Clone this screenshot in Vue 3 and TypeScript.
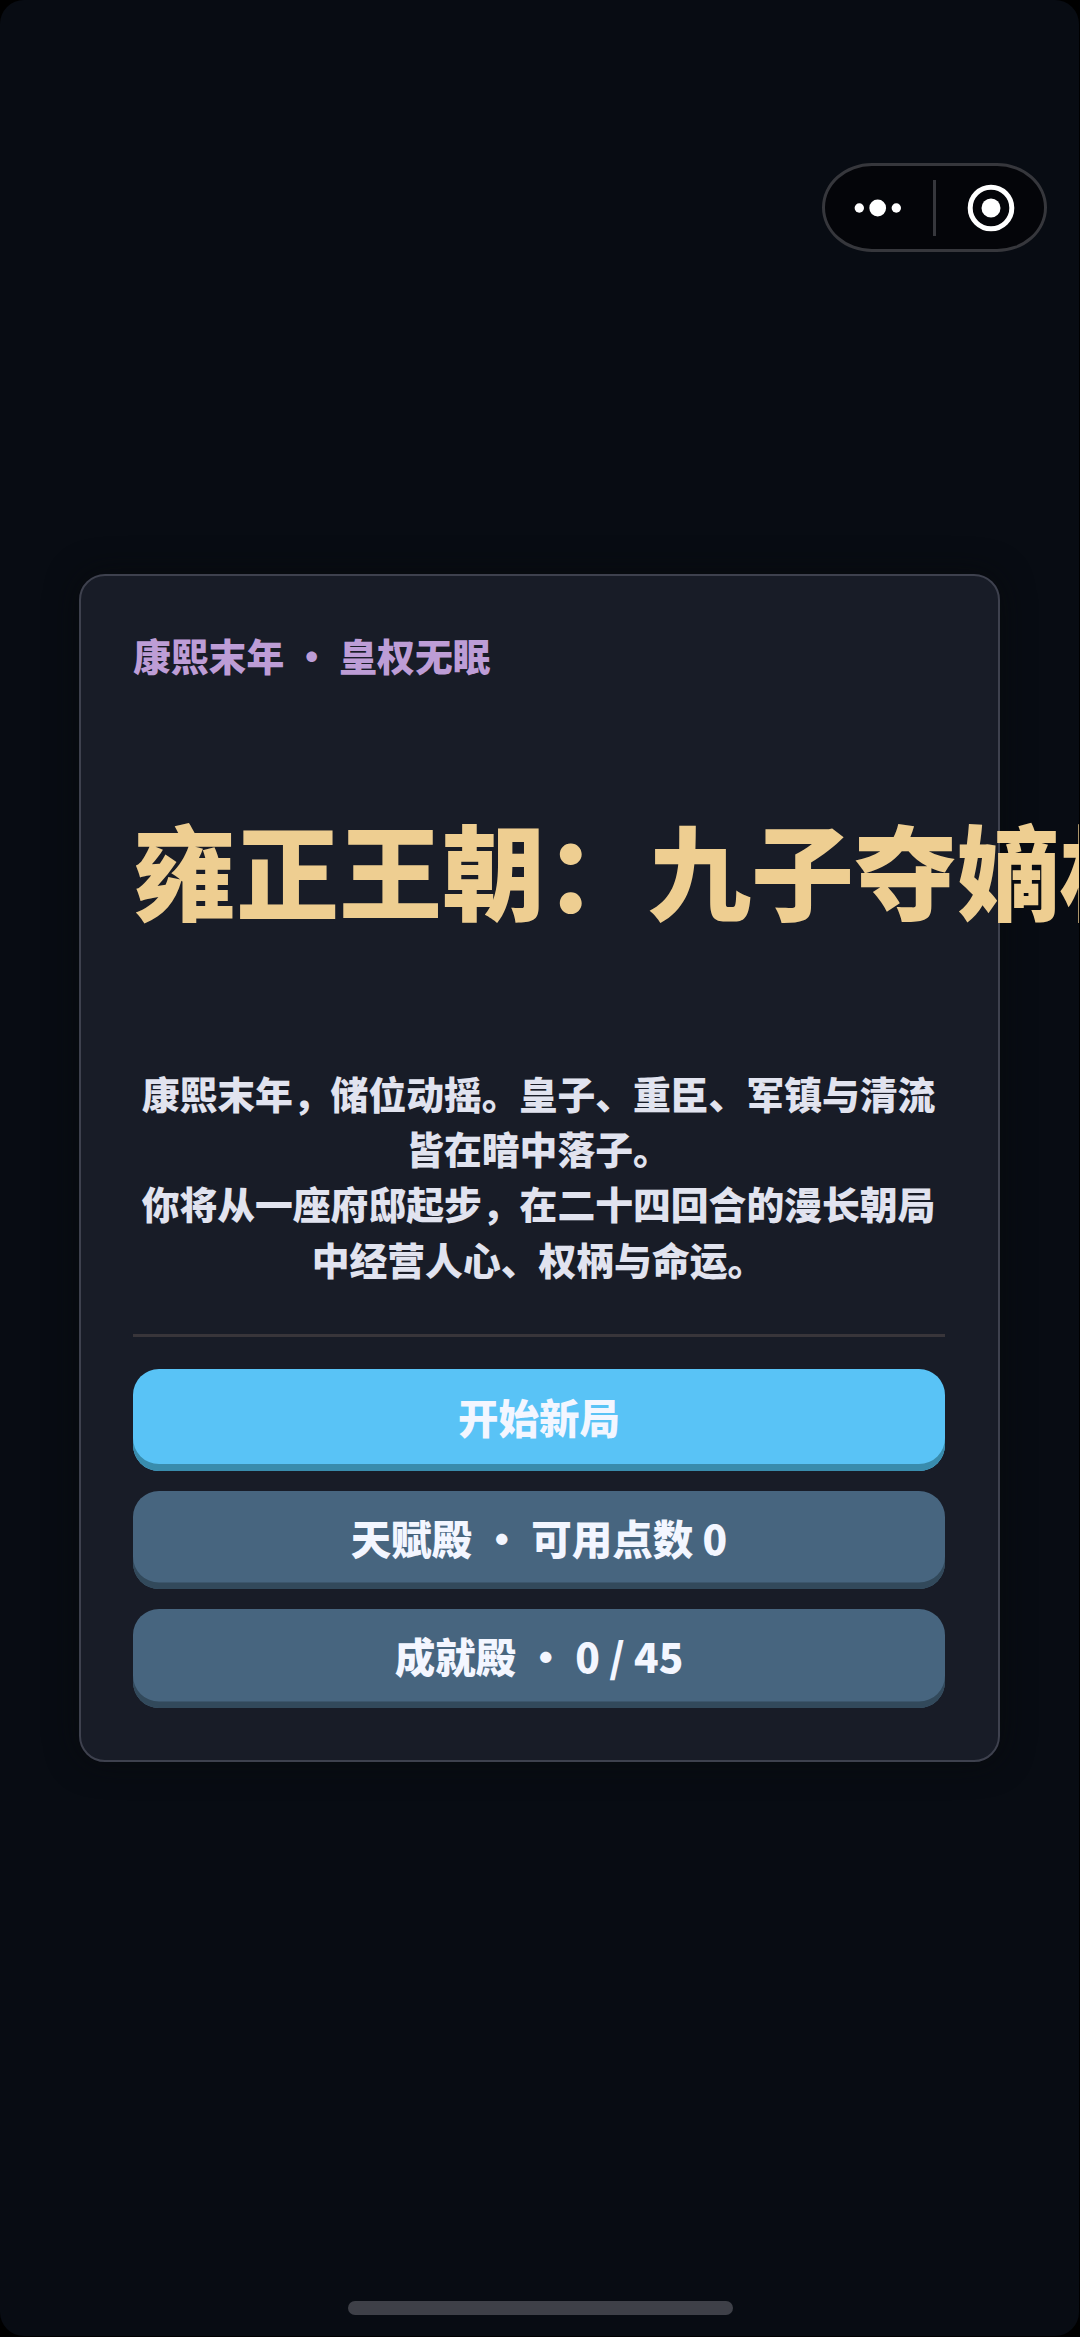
<script setup lang="ts">
interface MenuAction {
  label: string
  primary?: boolean
}

const actions: MenuAction[] = [
  { label: '开始新局', primary: true },
  { label: '天赋殿 · 可用点数 0' },
  { label: '成就殿 · 0 / 45' },
]
</script>

<template>
  <div class="device">
    <div class="screen">
      <header class="topbar">
        <div class="capsule">
          <svg class="more" viewBox="0 0 48 18" width="48" height="18" fill="#fff">
            <circle cx="5.3" cy="9" r="4.7" />
            <circle cx="23.7" cy="9" r="8.4" />
            <circle cx="42.3" cy="9" r="4.7" />
          </svg>
          <span class="split"></span>
          <svg class="close" viewBox="0 0 48 48" width="48" height="48">
            <circle cx="24" cy="24" r="20.8" fill="none" stroke="#fff" stroke-width="5" />
            <circle cx="24" cy="24" r="9.5" fill="#fff" />
          </svg>
        </div>
      </header>

      <main class="card">
        <p class="eyebrow">康熙末年 · 皇权无眠</p>
        <h1 class="title">雍正王朝：九子夺嫡权谋</h1>
        <p class="intro">
          康熙末年，储位动摇。皇子、重臣、军镇与清流皆在暗中落子。<br />你将从一座府邸起步，在二十四回合的漫长朝局中经营人心、权柄与命运。
        </p>
        <div class="rule"></div>
        <div class="actions">
          <button
            v-for="action in actions"
            :key="action.label"
            class="action"
            :class="{ primary: action.primary }"
            type="button"
          >
            {{ action.label }}
          </button>
        </div>
      </main>

      <footer class="bottom"><span class="home"></span></footer>
    </div>
  </div>
</template>

<style>
body {
  margin: 0;
  background: #000;
  overflow: hidden;
}
</style>

<style scoped>
.device {
  width: 1080px;
  height: 2337px;
  background: #000;
  overflow: hidden;
  font-family: 'Noto Sans CJK SC', sans-serif;
  font-weight: 900;
}
.screen {
  box-sizing: border-box;
  width: 1079px;
  height: 2336px;
  display: flex;
  flex-direction: column;
  overflow: hidden;
  border-radius: 24px;
  background: #080c13;
}
.topbar {
  height: 574px;
  flex: none;
  display: flex;
  justify-content: flex-end;
  align-items: flex-start;
  padding: 163px 32px 0 0;
  box-sizing: border-box;
}
.capsule {
  box-sizing: border-box;
  width: 225px;
  height: 89px;
  display: flex;
  align-items: center;
  border: 3px solid #36373c;
  border-radius: 50px / 44.5px;
  background: #040509;
}
.more {
  margin-left: 29px;
}
.split {
  width: 3px;
  height: 56px;
  margin-left: 31px;
  background: #36373c;
}
.close {
  margin-left: 31px;
}
.card {
  box-sizing: border-box;
  width: 921px;
  height: 1188px;
  flex: none;
  margin-left: 79px;
  padding: 51px 53px 0 52px;
  border: 2px solid #3e414e;
  border-radius: 26px;
  background: #181c27;
  box-shadow: 0 0 32px rgba(8, 10, 12, 0.7);
}
.eyebrow {
  margin: 0;
  font-size: 37.8px;
  line-height: 56px;
  color: #bd9dd6;
}
.title {
  margin: 111px 0 0;
  font-size: 103px;
  font-weight: 900;
  line-height: 150px;
  white-space: nowrap;
  color: #eece91;
}
.intro {
  margin: 121px 1px 0 0;
  font-size: 37.8px;
  line-height: 55.2px;
  text-align: center;
  color: #e1e3ef;
}
.rule {
  height: 3px;
  margin-top: 48px;
  background: #38353a;
}
.actions {
  display: flex;
  flex-direction: column;
  gap: 20px;
  margin-top: 32px;
}
.action {
  height: 98.5px;
  padding: 0 0 5px;
  border: 0;
  border-radius: 26px;
  background: #47657f;
  box-shadow: inset 0 -6.5px 0 #32495b;
  font: inherit;
  font-size: 40.5px;
  line-height: 58px;
  color: #f3f6ff;
}
.action.primary {
  height: 102px;
  background: #59c3f6;
  box-shadow: inset 0 -7px 0 #398cad;
}
.bottom {
  flex: 1;
  display: flex;
  justify-content: center;
  align-items: flex-end;
  padding-bottom: 21px;
}
.home {
  width: 385px;
  height: 14px;
  margin-left: 2px;
  border-radius: 7px;
  background: #3e4048;
}
</style>
